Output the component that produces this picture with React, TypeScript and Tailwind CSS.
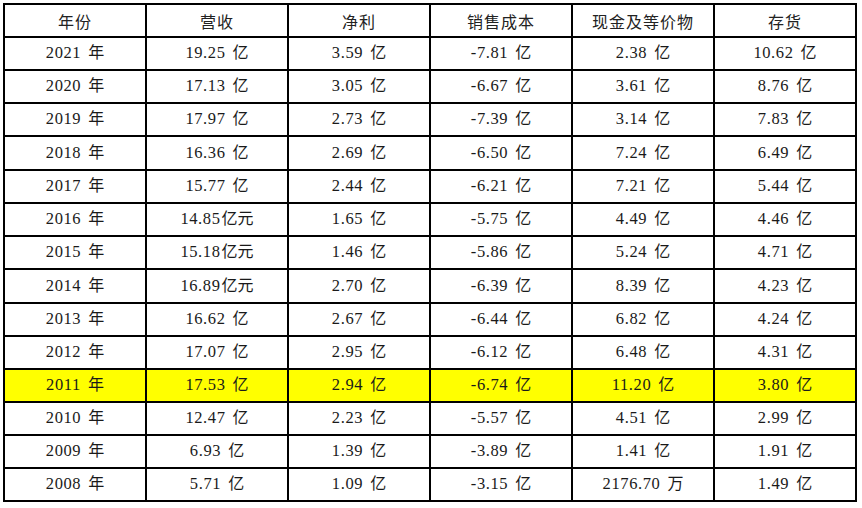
const headers = ["年份", "营收", "净利", "销售成本", "现金及等价物", "存货"];

const rows: string[][] = [
  ["2021 年", "19.25 亿", "3.59 亿", "-7.81 亿", "2.38 亿", "10.62 亿"],
  ["2020 年", "17.13 亿", "3.05 亿", "-6.67 亿", "3.61 亿", "8.76 亿"],
  ["2019 年", "17.97 亿", "2.73 亿", "-7.39 亿", "3.14 亿", "7.83 亿"],
  ["2018 年", "16.36 亿", "2.69 亿", "-6.50 亿", "7.24 亿", "6.49 亿"],
  ["2017 年", "15.77 亿", "2.44 亿", "-6.21 亿", "7.21 亿", "5.44 亿"],
  ["2016 年", "14.85亿元", "1.65 亿", "-5.75 亿", "4.49 亿", "4.46 亿"],
  ["2015 年", "15.18亿元", "1.46 亿", "-5.86 亿", "5.24 亿", "4.71 亿"],
  ["2014 年", "16.89亿元", "2.70 亿", "-6.39 亿", "8.39 亿", "4.23 亿"],
  ["2013 年", "16.62 亿", "2.67 亿", "-6.44 亿", "6.82 亿", "4.24 亿"],
  ["2012 年", "17.07 亿", "2.95 亿", "-6.12 亿", "6.48 亿", "4.31 亿"],
  ["2011 年", "17.53 亿", "2.94 亿", "-6.74 亿", "11.20 亿", "3.80 亿"],
  ["2010 年", "12.47 亿", "2.23 亿", "-5.57 亿", "4.51 亿", "2.99 亿"],
  ["2009 年", "6.93 亿", "1.39 亿", "-3.89 亿", "1.41 亿", "1.91 亿"],
  ["2008 年", "5.71 亿", "1.09 亿", "-3.15 亿", "2176.70 万", "1.49 亿"],
];

// splits "19.25 亿" into number + unit so the gap can be set like SimSun's wide space
function Value({ text }: { text: string }) {
  const m = text.match(/^([-\d.]+)\s*(.*)$/);
  if (!m) return <span>{text}</span>;
  const spaced = text.includes(" ");
  return (
    <span className="flex items-baseline">
      <span className="font-['Liberation_Serif'] text-[16.5px] tracking-[0.6px]">{m[1]}</span>
      <span className={spaced ? "ml-[7px]" : "ml-[1px]"}>{m[2]}</span>
    </span>
  );
}

export default function App() {
  return (
    <div className="h-[508px] w-[862px] bg-white pl-[3px] pt-[3px] font-['Liberation_Serif','Noto_Sans_CJK_SC',serif] text-[16px] text-[#1a1a1a]">
      <div className="grid w-max grid-cols-[repeat(6,140px)] grid-rows-[31px_31px_31px_31px_32px_31px_31px_31px_32px_31px_31px_31px_31px_31px_31px] gap-[2px] bg-black p-[2px]">
        {headers.map((h) => (
          <div key={h} className="flex items-center justify-center bg-white font-['Noto_Sans_CJK_SC',sans-serif] tracking-[1px] text-[#222]">
            {h}
          </div>
        ))}
        {rows.map((r) =>
          r.map((c, j) => (
            <div
              key={r[0] + j}
              className={
                r[0] === "2011 年"
                  ? "flex items-center justify-center bg-[#ffff00]"
                  : "flex items-center justify-center bg-white"
              }
            >
              <Value text={c} />
            </div>
          ))
        )}
      </div>
    </div>
  );
}
